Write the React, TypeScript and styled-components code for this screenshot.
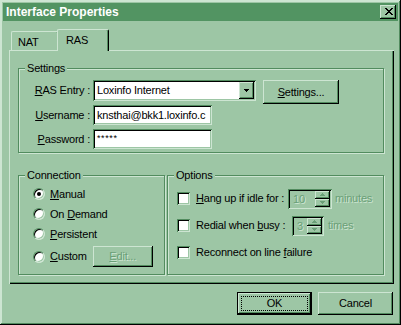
import React from 'react';
import styled, { createGlobalStyle, css } from 'styled-components';

const C = {
  face: '#9dc6a5',
  light: '#cde5d2',
  shadow: '#528c5f',
  dark: '#000000',
  title: '#529462',
  dim: '#6a9f77'
};

const GlobalStyle = createGlobalStyle`
  html, body { margin: 0; padding: 0; background: ${C.face}; }
  body {
    font-family: "Liberation Sans", Arial, sans-serif;
    font-size: 11px;
    line-height: 13px;
    letter-spacing: -0.2px;
    color: #000;
  }
  * { box-sizing: border-box; }
`;

const raised = css`
  box-shadow: inset -1px -1px 0 ${C.dark}, inset 1px 1px 0 ${C.light},
    inset -2px -2px 0 ${C.shadow}, inset 2px 2px 0 ${C.face};
`;

const sunken = css`
  box-shadow: inset 1px 1px 0 ${C.shadow}, inset -1px -1px 0 ${C.light},
    inset 2px 2px 0 ${C.dark}, inset -2px -2px 0 ${C.face};
`;

const disabledText = css`
  color: ${C.dim};
  text-shadow: 1px 1px 0 ${C.light};
`;

const Window = styled.div`
  width: 401px;
  height: 325px;
  padding: 3px;
  display: flex;
  flex-direction: column;
  background: ${C.face};
  box-shadow: inset -1px -1px 0 ${C.dark}, inset 1px 1px 0 ${C.light},
    inset -2px -2px 0 ${C.shadow}, inset 2px 2px 0 ${C.light};
`;

const TitleBar = styled.div`
  flex: none;
  height: 18px;
  display: flex;
  align-items: center;
  justify-content: space-between;
  padding: 0 2px 0 3px;
  background: ${C.title};
  color: #fff;
  font: bold 12px/18px "Liberation Sans", Arial, sans-serif;
  letter-spacing: 0;
`;

const CloseButton = styled.div`
  width: 16px;
  height: 14px;
  display: grid;
  place-items: center;
  background: ${C.face};
  ${raised};
  svg { display: block; margin: 0 0 1px 1px; }
`;

const Body = styled.div`
  flex: 1;
  display: flex;
  flex-direction: column;
  padding: 8px 4px 0 6px;
`;

const TabStrip = styled.div`
  height: 21px;
  display: flex;
  align-items: flex-end;
  padding-left: 2px;
`;

const Tab = styled.div<{ $active?: boolean }>`
  position: relative;
  z-index: ${(p) => (p.$active ? 1 : 0)};
  width: ${(p) => (p.$active ? 52 : 48)}px;
  height: ${(p) => (p.$active ? 22 : 19)}px;
  margin: ${(p) => (p.$active ? '0 -2px -1px -2px' : '0')};
  padding: 4px 0 0 ${(p) => (p.$active ? 8 : 6)}px;
  background: ${C.face};
  border-top: 1px solid ${C.light};
  border-left: 1px solid ${C.light};
  border-right: 1px solid ${C.dark};
  border-radius: 2px 2px 0 0;
  box-shadow: inset -1px 0 0 ${C.shadow};
`;

const Panel = styled.div`
  width: 385px;
  height: 234px;
  padding: 12px 0 0 9px;
  background: ${C.face};
  box-shadow: inset 1px 1px 0 ${C.light}, inset -1px -1px 0 ${C.dark},
    inset -2px -2px 0 ${C.shadow};
`;

const Group = styled.fieldset<{ $width: number }>`
  width: ${(p) => p.$width}px;
  min-width: 0;
  margin: 0;
  padding: 0;
  border: 1px solid ${C.shadow};
  box-shadow: inset 1px 1px 0 ${C.light}, 1px 1px 0 ${C.light};
`;

const Legend = styled.legend`
  margin-left: 6px;
  padding: 0 2px;
  line-height: 13px;
  background: ${C.face};
`;

const SettingsGrid = styled.div`
  display: grid;
  grid-template-columns: 61px 163px auto;
  column-gap: 3px;
  row-gap: 4px;
  align-items: center;
  padding: 5px 0 3px 10px;
`;

const FieldLabel = styled.label`
  text-align: right;
  white-space: nowrap;
`;

const Combo = styled.div`
  height: 21px;
  display: flex;
  align-items: center;
  padding: 2px;
  background: #fff;
  ${sunken};
`;

const ComboText = styled.span`
  flex: 1;
  padding-left: 2px;
  white-space: nowrap;
  overflow: hidden;
`;

const DropButton = styled.div`
  width: 15px;
  height: 17px;
  display: grid;
  place-items: center;
  background: ${C.face};
  ${raised};
  svg { display: block; }
`;

const TextField = styled.div<{ $masked?: boolean }>`
  width: 119px;
  height: 20px;
  padding: ${(p) => (p.$masked ? '3px 2px 0 4px' : '0 2px 0 4px')};
  background: #fff;
  font-size: ${(p) => (p.$masked ? 9 : 11)}px;
  letter-spacing: ${(p) => (p.$masked ? 0.6 : -0.2)}px;
  line-height: ${(p) => (p.$masked ? 12 : 20)}px;
  white-space: nowrap;
  overflow: hidden;
  ${sunken};
`;

const Button = styled.div<{ $width: number; $height?: number; $disabled?: boolean }>`
  width: ${(p) => p.$width}px;
  height: ${(p) => p.$height ?? 23}px;
  display: flex;
  align-items: center;
  justify-content: center;
  background: ${C.face};
  white-space: nowrap;
  ${raised};
  ${(p) => p.$disabled && disabledText};
`;

const SettingsButton = styled(Button)`
  align-self: start;
  margin: 0 0 -3px 4px;
`;

const DefaultButton = styled.div`
  width: 75px;
  height: 23px;
  padding: 1px;
  background: ${C.dark};
`;

const DefaultFace = styled.div`
  height: 100%;
  padding: 3px;
  background: ${C.face};
  ${raised};
`;

const FocusRing = styled.div`
  height: 100%;
  display: flex;
  align-items: center;
  justify-content: center;
  outline: 1px dotted ${C.dark};
  outline-offset: -1px;
`;

const LowerRow = styled.div`
  display: flex;
  gap: 2px;
  margin-top: 16px;
`;

const RadioList = styled.div`
  display: flex;
  flex-direction: column;
  padding: 2px 0 7px 14px;
`;

const RadioRow = styled.div<{ $tall?: boolean }>`
  height: ${(p) => (p.$tall ? 21 : 20)}px;
  margin-top: ${(p) => (p.$tall ? 2 : 0)}px;
  display: flex;
  align-items: center;
  gap: 5px;
`;

const Radio = styled.span<{ $checked?: boolean }>`
  width: 12px;
  height: 12px;
  flex: none;
  display: grid;
  place-items: center;
  border-radius: 50%;
  background: #fff;
  border: 1px solid;
  border-color: ${C.shadow} ${C.light} ${C.light} ${C.shadow};
  box-shadow: inset 1px 1px 0 ${C.dark}, inset -1px -1px 0 ${C.face};
  &::after {
    content: '';
    width: 4px;
    height: 4px;
    border-radius: 50%;
    background: ${(p) => (p.$checked ? C.dark : 'transparent')};
  }
`;

const EditButton = styled(Button)`
  margin-left: 1px;
`;

const OptionList = styled.div`
  display: flex;
  flex-direction: column;
  gap: 6px;
  padding: 6px 0 0 9px;
`;

const OptionRow = styled.div`
  height: 21px;
  display: flex;
  align-items: center;
`;

const Check = styled.span`
  width: 13px;
  height: 13px;
  flex: none;
  margin-right: 6px;
  background: #fff;
  ${sunken};
`;

const OptionLabel = styled.span<{ $width?: number }>`
  width: ${(p) => (p.$width ? `${p.$width}px` : 'auto')};
  flex: none;
  white-space: nowrap;
`;

const Spin = styled.div<{ $width: number }>`
  width: ${(p) => p.$width}px;
  height: 20px;
  display: flex;
  padding: 2px;
  background: ${C.face};
  ${sunken};
`;

const SpinValue = styled.span`
  flex: 1;
  padding-left: 3px;
  line-height: 16px;
  ${disabledText};
`;

const SpinArrows = styled.div`
  width: 15px;
  display: flex;
  flex-direction: column;
`;

const SpinArrow = styled.div`
  flex: 1;
  display: grid;
  place-items: center;
  background: ${C.face};
  ${raised};
  svg { display: block; }
`;

const Unit = styled.span<{ $gap: number }>`
  margin-left: ${(p) => p.$gap}px;
  ${disabledText};
`;

const Footer = styled.div`
  display: flex;
  justify-content: flex-end;
  gap: 6px;
  margin-top: 8px;
  padding-right: 1px;
`;

const CloseGlyph = () => (
  <svg width="8" height="7" viewBox="0 0 8 7" shapeRendering="crispEdges">
    <path
      fill="#000"
      d="M0 0h2v1H0zM6 0h2v1H6zM1 1h2v1H1zM5 1h2v1H5zM2 2h4v1H2zM3 3h2v1H3zM2 4h4v1H2zM1 5h2v1H1zM5 5h2v1H5zM0 6h2v1H0zM6 6h2v1H6z"
    />
  </svg>
);

const Arrow = ({ up, color }: { up?: boolean; color: string }) => (
  <svg width="5" height="3" viewBox="0 0 5 3" shapeRendering="crispEdges">
    <path
      fill={color}
      d={up ? 'M2 0h1v1H2zM1 1h3v1H1zM0 2h5v1H0z' : 'M0 0h5v1H0zM1 1h3v1H1zM2 2h1v1H2z'}
    />
  </svg>
);

const SpinBox = ({ value, width }: { value: string; width: number }) => (
  <Spin $width={width}>
    <SpinValue>{value}</SpinValue>
    <SpinArrows>
      <SpinArrow>
        <Arrow up color={C.dim} />
      </SpinArrow>
      <SpinArrow>
        <Arrow color={C.dim} />
      </SpinArrow>
    </SpinArrows>
  </Spin>
);

export default function App() {
  return (
    <>
      <GlobalStyle />
      <Window>
        <TitleBar>
          <span>Interface Properties</span>
          <CloseButton>
            <CloseGlyph />
          </CloseButton>
        </TitleBar>
        <Body>
          <TabStrip>
            <Tab>NAT</Tab>
            <Tab $active>RAS</Tab>
          </TabStrip>
          <Panel>
            <Group $width={366}>
              <Legend>Settings</Legend>
              <SettingsGrid>
                <FieldLabel>
                  <u>R</u>AS Entry :
                </FieldLabel>
                <Combo>
                  <ComboText>Loxinfo Internet</ComboText>
                  <DropButton>
                    <Arrow color={C.dark} />
                  </DropButton>
                </Combo>
                <SettingsButton $width={76} $height={24}>
                  <span>
                    <u>S</u>ettings...
                  </span>
                </SettingsButton>
                <FieldLabel>
                  <u>U</u>sername :
                </FieldLabel>
                <TextField>knsthai@bkk1.loxinfo.c</TextField>
                <span />
                <FieldLabel>
                  <u>P</u>assword :
                </FieldLabel>
                <TextField $masked>*****</TextField>
                <span />
              </SettingsGrid>
            </Group>
            <LowerRow>
              <Group $width={147}>
                <Legend>Connection</Legend>
                <RadioList>
                  <RadioRow>
                    <Radio $checked />
                    <span>
                      <u>M</u>anual
                    </span>
                  </RadioRow>
                  <RadioRow>
                    <Radio />
                    <span>
                      On <u>D</u>emand
                    </span>
                  </RadioRow>
                  <RadioRow>
                    <Radio />
                    <span>
                      <u>P</u>ersistent
                    </span>
                  </RadioRow>
                  <RadioRow $tall>
                    <Radio />
                    <span>
                      <u>C</u>ustom
                    </span>
                    <EditButton $width={60} $height={21} $disabled>
                      <span>
                        <u>E</u>dit...
                      </span>
                    </EditButton>
                  </RadioRow>
                </RadioList>
              </Group>
              <Group $width={217}>
                <Legend>Options</Legend>
                <OptionList>
                  <OptionRow>
                    <Check />
                    <OptionLabel $width={92}>
                      <u>H</u>ang up if idle for :
                    </OptionLabel>
                    <SpinBox value="10" width={44} />
                    <Unit $gap={3}>minutes</Unit>
                  </OptionRow>
                  <OptionRow>
                    <Check />
                    <OptionLabel $width={96}>
                      Redial when <u>b</u>usy :
                    </OptionLabel>
                    <SpinBox value="3" width={32} />
                    <Unit $gap={4}>times</Unit>
                  </OptionRow>
                  <OptionRow>
                    <Check />
                    <OptionLabel>
                      Reconnect on line <u>f</u>ailure
                    </OptionLabel>
                  </OptionRow>
                </OptionList>
              </Group>
            </LowerRow>
          </Panel>
          <Footer>
            <DefaultButton>
              <DefaultFace>
                <FocusRing>OK</FocusRing>
              </DefaultFace>
            </DefaultButton>
            <Button $width={75}>Cancel</Button>
          </Footer>
        </Body>
      </Window>
    </>
  );
}
